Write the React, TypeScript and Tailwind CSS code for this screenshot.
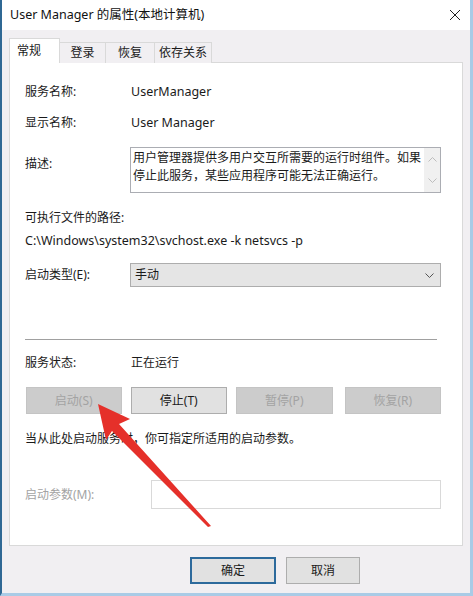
import React from "react";

const font = { fontFamily: '"Noto Sans", "Noto Sans CJK SC", sans-serif' };

const tabs = ["常规", "登录", "恢复", "依存关系"];

function Row({ label, children, className = "" }: { label: string; children?: React.ReactNode; className?: string }) {
  return (
    <div className={`flex items-center h-5 ${className}`}>
      <div className="w-[106px] shrink-0">{label}</div>
      {children}
    </div>
  );
}

function Btn({ label, disabled, className = "" }: { label: string; disabled?: boolean; className?: string }) {
  return (
    <div
      className={`h-[27px] flex items-center justify-center border ${
        disabled ? "bg-[#cccccc] border-[#c4c4c4] text-[#a3a3a3]" : "bg-[#e1e1e1] border-[#adadad] text-[#1a1a1a]"
      } ${className}`}
    >
      {label}
    </div>
  );
}

function Chevron({ up, className = "" }: { up?: boolean; className?: string }) {
  return (
    <svg width="9" height="5" viewBox="0 0 9 5" className={className}>
      <path d={up ? "M0.5 4.5 L4.5 0.5 L8.5 4.5" : "M0.5 0.5 L4.5 4.5 L8.5 0.5"} fill="none" stroke="currentColor" strokeWidth="1" />
    </svg>
  );
}

export default function App() {
  return (
    <div
      style={font}
      className="relative w-[473px] h-[596px] overflow-hidden bg-[#f1eff2] text-[12px] text-[#1a1a1a] border-l-2 border-l-[#2f6894] border-r-[3px] border-r-[#a9cbe6] border-b-[3px] border-b-[#a9cbe6] flex flex-col"
    >
      {/* title bar */}
      <div className="h-[30px] bg-white flex items-center justify-between pl-2 pr-[9px] shrink-0">
        <span className="text-[12.5px] text-[#111]">User Manager 的属性(本地计算机)</span>
        <svg width="12" height="12" viewBox="0 0 12 12">
          <path d="M1 1 L11 11 M11 1 L1 11" stroke="#222" strokeWidth="1" />
        </svg>
      </div>

      {/* tabs */}
      <div className="flex items-end pl-[7px] mt-[8px] h-[25px] relative z-10">
        {tabs.map((t, i) => (
          <div
            key={t}
            className={
              i === 0
                ? "h-[25px] w-[51px] bg-white border border-[#d9d9d9] border-b-0 pl-[7px] pt-[3px]"
                : "h-[21px] bg-[#f1eff2] border border-[#d9d9d9] border-l-0 border-b-0 flex items-center justify-center " +
                  (i === 3 ? "w-[57px]" : i === 2 ? "w-[49px]" : "w-[46px]")
            }
          >
            {t}
          </div>
        ))}
      </div>

      {/* general page */}
      <div className="mx-[7px] -mt-px h-[484px] bg-white border border-[#d9d9d9] pl-[15px] pr-[21px] flex flex-col shrink-0">
        <Row label="服务名称:" className="mt-[19px]">
          <span className="text-[12.5px]">UserManager</span>
        </Row>
        <Row label="显示名称:" className="mt-[11px]">
          <span className="text-[12.5px]">User Manager</span>
        </Row>

        <div className="flex mt-[14px]">
          <div className="w-[105px] pt-[8px]">描述:</div>
          <div className="flex-1 h-[46px] border border-[#abadb3] flex">
            <div className="flex-1 pl-[2px] pt-[1px] leading-[18px]">
              用户管理器提供多用户交互所需要的运行时组件。如果停止此服务，某些应用程序可能无法正确运行。
            </div>
            <div className="w-[16px] bg-[#f0f0f0] flex flex-col items-center justify-between py-[9px] text-[#bdbdbd]">
              <Chevron up />
              <Chevron />
            </div>
          </div>
        </div>

        <div className="h-5 flex items-center mt-[15px]">可执行文件的路径:</div>
        <div className="h-5 flex items-center mt-[3px] text-[12.5px]">C:\Windows\system32\svchost.exe -k netsvcs -p</div>

        <div className="flex items-center mt-[12px]">
          <div className="w-[105px]">启动类型(E):</div>
          <div className="flex-1 h-[24px] bg-[#e5e5e5] border border-[#adadad] flex items-center justify-between pl-[4px] pr-[6px]">
            <span>手动</span>
            <Chevron className="text-[#555]" />
          </div>
        </div>

        <div className="mt-[52px] h-px bg-[#a0a0a0] mr-[4px]" />

        <Row label="服务状态:" className="mt-[13px]">
          <span>正在运行</span>
        </Row>

        <div className="flex mt-[14px] pl-px">
          <Btn label="启动(S)" disabled className="w-[96px]" />
          <Btn label="停止(T)" className="w-[97px] ml-[9px]" />
          <Btn label="暂停(P)" disabled className="w-[97px] ml-[9px]" />
          <Btn label="恢复(R)" disabled className="w-[97px] ml-[12px]" />
        </div>

        <div className="h-5 flex items-center mt-[15px]">当从此处启动服务时，你可指定所适用的启动参数。</div>

        <div className="flex items-center mt-[31px]">
          <div className="w-[126px] text-[#a3a3a3]">启动参数(M):</div>
          <div className="flex-1 h-[29px] border border-[#d9d9d9]" />
        </div>
      </div>

      {/* dialog buttons */}
      <div className="flex mt-[11px] pl-[188px]">
        <div className="w-[86px] h-[27px] bg-[#e1e1e1] border-2 border-[#2d6a9c] flex items-center justify-center">确定</div>
        <div className="w-[74px] h-[27px] ml-[10px] bg-[#e1e1e1] border border-[#adadad] flex items-center justify-center">
          取消
        </div>
      </div>

      {/* red annotation arrow */}
      <svg className="absolute left-0 top-0 pointer-events-none" width="473" height="596" viewBox="0 0 473 596">
        <path d="M96 404 L128 419 L117 424 L209 526 L206 527 L110 431 L104 440 Z" fill="#e5302a" />
      </svg>
    </div>
  );
}
